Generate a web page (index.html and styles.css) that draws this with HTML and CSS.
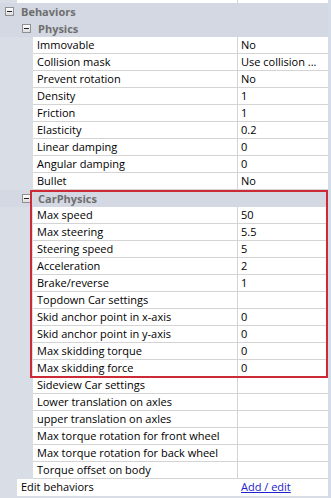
FILE: index.html
```html
<!DOCTYPE html>
<html>
<head>
<meta charset="utf-8">
<link rel="stylesheet" href="styles.css">
</head>
<body>
<div class="panel">
  <div class="grid">
    <div class="top"><div class="top-name"></div></div>
    <div class="hdr l0"><span class="minus"></span><span>Behaviors</span></div>
    <div class="hdr l1"><span class="minus"></span><span>Physics</span></div>
    <div class="row"><div class="name">Immovable</div><div class="val">No</div></div>
    <div class="row"><div class="name">Collision mask</div><div class="val">Use collision ...</div></div>
    <div class="row"><div class="name">Prevent rotation</div><div class="val">No</div></div>
    <div class="row"><div class="name">Density</div><div class="val">1</div></div>
    <div class="row"><div class="name">Friction</div><div class="val">1</div></div>
    <div class="row"><div class="name">Elasticity</div><div class="val">0.2</div></div>
    <div class="row"><div class="name">Linear damping</div><div class="val">0</div></div>
    <div class="row"><div class="name">Angular damping</div><div class="val">0</div></div>
    <div class="row"><div class="name">Bullet</div><div class="val">No</div></div>
    <div class="group">
      <div class="hdr l1"><span class="minus"></span><span>CarPhysics</span></div>
      <div class="row"><div class="name">Max speed</div><div class="val">50</div></div>
      <div class="row"><div class="name">Max steering</div><div class="val">5.5</div></div>
      <div class="row"><div class="name">Steering speed</div><div class="val">5</div></div>
      <div class="row"><div class="name">Acceleration</div><div class="val">2</div></div>
      <div class="row"><div class="name">Brake/reverse</div><div class="val">1</div></div>
      <div class="row"><div class="name">Topdown Car settings</div><div class="val"></div></div>
      <div class="row"><div class="name">Skid anchor point in x-axis</div><div class="val">0</div></div>
      <div class="row"><div class="name">Skid anchor point in y-axis</div><div class="val">0</div></div>
      <div class="row"><div class="name">Max skidding torque</div><div class="val">0</div></div>
      <div class="row"><div class="name">Max skidding force</div><div class="val">0</div></div>
    </div>
    <div class="row"><div class="name">Sideview Car settings</div><div class="val"></div></div>
    <div class="row"><div class="name">Lower translation on axles</div><div class="val"></div></div>
    <div class="row"><div class="name">upper translation on axles</div><div class="val"></div></div>
    <div class="row"><div class="name">Max torque rotation for front wheel</div><div class="val"></div></div>
    <div class="row"><div class="name">Max torque rotation for back wheel</div><div class="val"></div></div>
    <div class="row"><div class="name">Torque offset on body</div><div class="val"></div></div>
    <div class="row edit"><div class="name">Edit behaviors</div><div class="val"><a class="link" href="#">Add / edit</a></div></div>
  </div>
  <div class="edge"></div>
</div>
</body>
</html>
```
FILE: styles.css
```css
body {
  margin: 0;
  background: #d9dde5;
  font-family: "Open Sans", "Liberation Sans", sans-serif;
  font-size: 11px;
  color: #000;
}
.panel {
  display: flex;
  height: 498px;
}
.grid {
  width: 328px;
}
.edge {
  width: 3px;
  background: #d3dce8;
}
.top {
  height: 3px;
  margin-left: 17px;
  background: #fff;
  display: flex;
}
.top-name {
  width: 221px;
  box-sizing: border-box;
  border-right: 1px solid #d4d4d4;
}
.hdr {
  height: 17px;
  display: flex;
  align-items: center;
  background: #d3d8e2;
  font-weight: bold;
  color: #6e6e6e;
  box-sizing: border-box;
}
.l0 { padding-left: 5px; }
.l1 { padding-left: 22px; }
.minus {
  width: 9px;
  height: 9px;
  box-sizing: border-box;
  border: 1px solid #8e8f8f;
  background: linear-gradient(#ffffff, #dcdcdc);
  position: relative;
  margin-right: 7px;
  flex: none;
}
.minus::after {
  content: "";
  position: absolute;
  left: 1px;
  right: 1px;
  top: 3px;
  height: 1px;
  background: #222;
}
.row {
  height: 17px;
  display: flex;
  margin-left: 33px;
  background: #fff;
  border-bottom: 1px solid #d4d4d4;
  box-sizing: border-box;
}
.name {
  width: 205px;
  flex: none;
  box-sizing: border-box;
  border-right: 1px solid #d4d4d4;
  padding-left: 4px;
  line-height: 16px;
  white-space: nowrap;
  overflow: hidden;
}
.val {
  flex: 1;
  padding-left: 3px;
  line-height: 16px;
  white-space: nowrap;
  overflow: hidden;
}
.edit {
  margin-left: 17px;
  border-bottom: none;
}
.edit .name {
  width: 221px;
  border-right: none;
}
.link {
  color: #2222cc;
  text-decoration: underline;
}
.group {
  position: relative;
}
.group::after {
  content: "";
  position: absolute;
  left: 30px;
  top: 0;
  right: 0;
  bottom: -1px;
  border: 2px solid #cc2a35;
  pointer-events: none;
}
```
